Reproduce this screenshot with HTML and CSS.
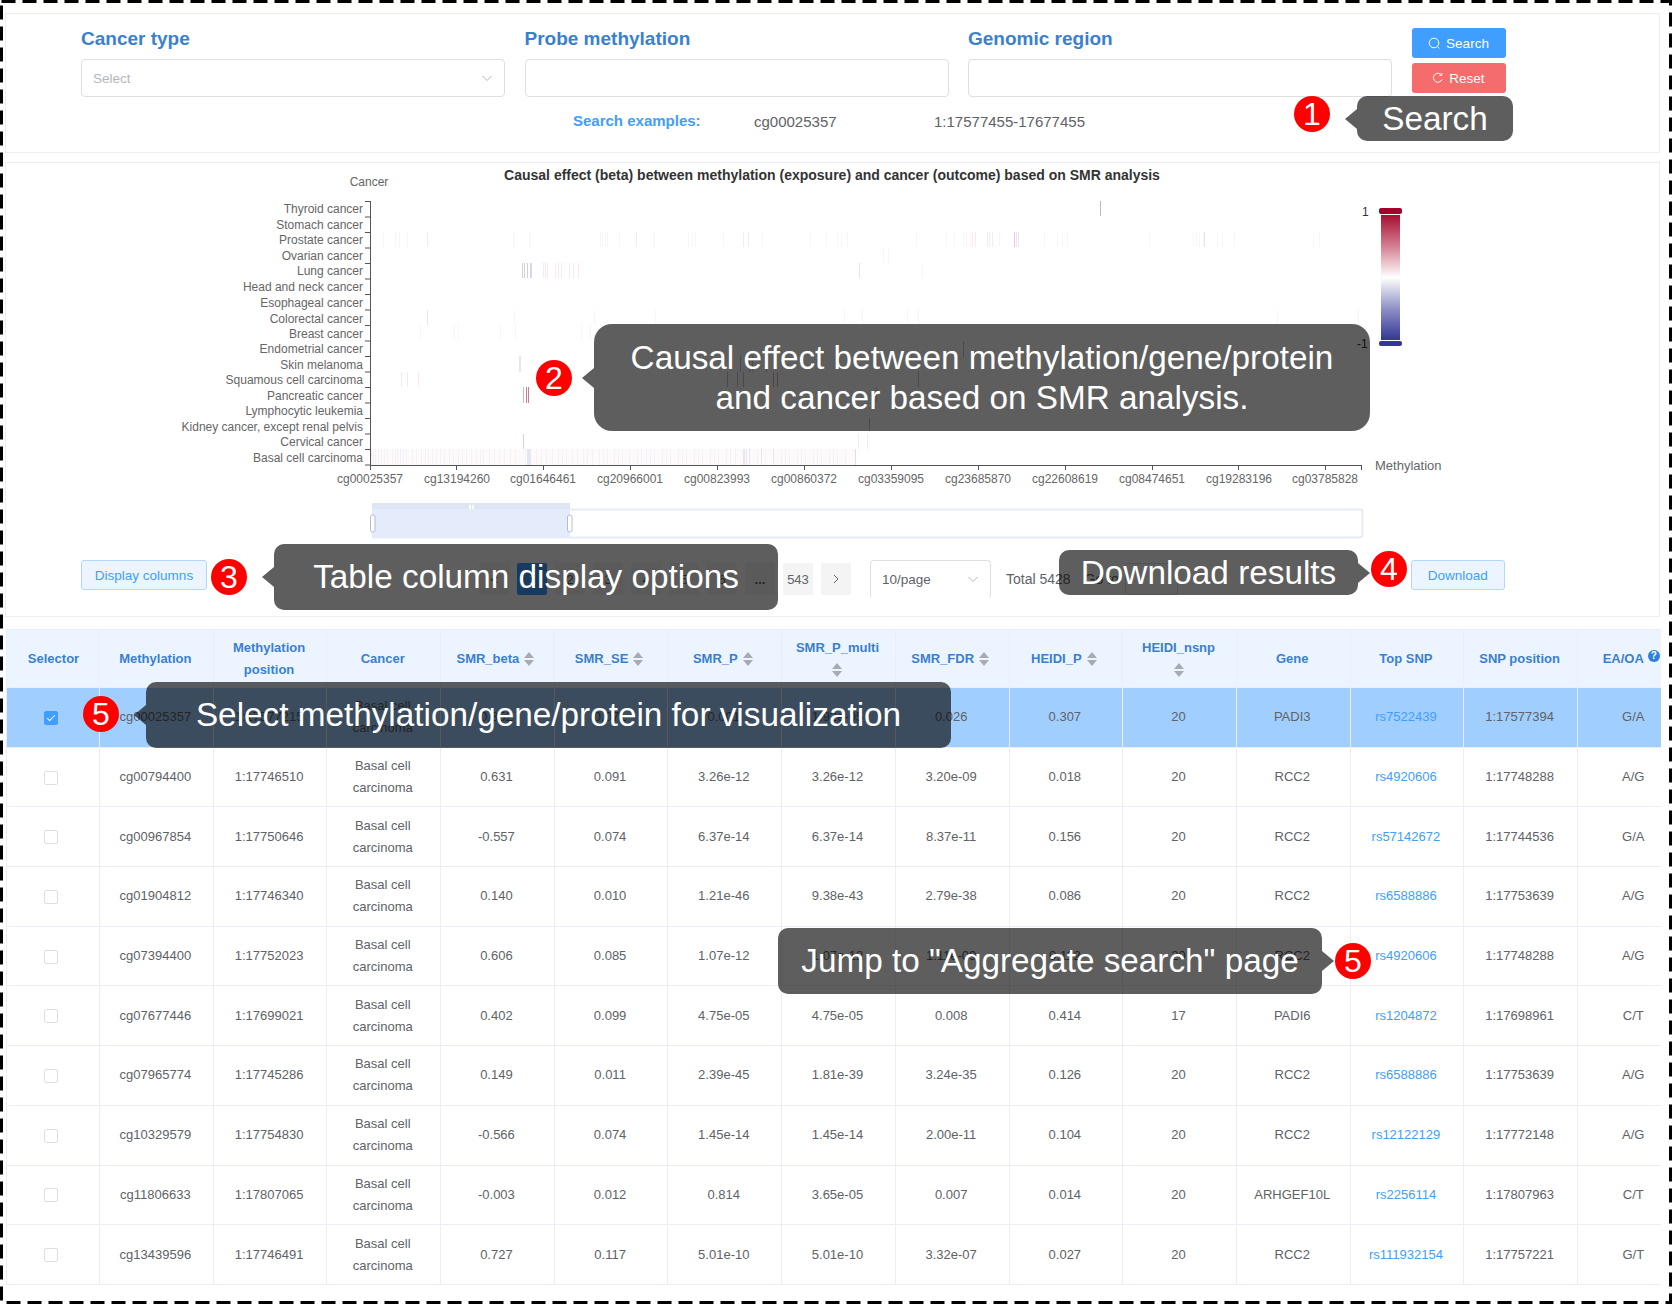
FILE: index.html
```html
<!DOCTYPE html>
<html>
<head>
<meta http-equiv="Content-type" content="text/html; charset=UTF-8">
<title>SMR search</title>
<link rel="stylesheet" href="styles.css">
</head>
<body>
<div class="page">

  <!-- search form -->
  <section class="panel panel-search">
    <div class="search-row">
      <div class="field">
        <label>Cancer type</label>
        <div class="control">
          <span class="placeholder">Select</span>
          <svg class="chevron" width="12" height="12" viewBox="0 0 12 12"><path d="M1.5 4l4.5 4.5L10.500 4" fill="none" stroke="#b4b7bd" stroke-width="1"/></svg>
        </div>
      </div>
      <div class="field">
        <label>Probe methylation</label>
        <div class="control"></div>
      </div>
      <div class="field">
        <label>Genomic region</label>
        <div class="control"></div>
      </div>
      <div class="search-buttons">
        <button class="btn btn-blue">
          <svg width="13" height="13" viewBox="0 0 13 13"><circle cx="6" cy="6" r="4.800" fill="none" stroke="#fff"/><path d="M9.500 9.500l2 2" stroke="#fff"/></svg>
          Search
        </button>
        <button class="btn btn-red">
          <svg width="12" height="12" viewBox="0 0 12 12"><path d="M9.500 3a4.500 4.500 0 1 0 .6 4.500" fill="none" stroke="#fff"/><path d="M9.800 1v2.500H7.300" fill="none" stroke="#fff" stroke-width=".8"/></svg>
          Reset
        </button>
      </div>
    </div>
    <div class="examples">
      <b class="examples-title">Search examples:</b>
      <span class="example-probe">cg00025357</span>
      <span class="example-region">1:17577455-17677455</span>
    </div>
  </section>

  <!-- heatmap + toolbar -->
  <section class="panel panel-chart">
    <svg class="chart" width="1653" height="385" viewBox="6 163 1653 385">
      <text class="chart-title" x="832" y="180" text-anchor="middle">Causal effect (beta) between methylation (exposure) and cancer (outcome) based on SMR analysis</text>
      <text class="axis-name" x="369" y="186" text-anchor="middle">Cancer</text>

      <g class="row-labels" text-anchor="end">
        <text x="363" y="213">Thyroid cancer</text>
        <text x="363" y="229">Stomach cancer</text>
        <text x="363" y="244">Prostate cancer</text>
        <text x="363" y="260">Ovarian cancer</text>
        <text x="363" y="275">Lung cancer</text>
        <text x="363" y="291">Head and neck cancer</text>
        <text x="363" y="307">Esophageal cancer</text>
        <text x="363" y="323">Colorectal cancer</text>
        <text x="363" y="338">Breast cancer</text>
        <text x="363" y="353">Endometrial cancer</text>
        <text x="363" y="369">Skin melanoma</text>
        <text x="363" y="384">Squamous cell carcinoma</text>
        <text x="363" y="400">Pancreatic cancer</text>
        <text x="363" y="415">Lymphocytic leukemia</text>
        <text x="363" y="431">Kidney cancer, except renal pelvis</text>
        <text x="363" y="446">Cervical cancer</text>
        <text x="363" y="462">Basal cell carcinoma</text>
      </g>

      <!-- heat cells, one stroke colour per group -->
      <rect x="371" y="449" width="485" height="16" fill="#fcfafb"/>
      <g fill="none" stroke-width="1">
        <path stroke="#b5b8da" d="M1100.500 201v15"/>
        <path stroke="#f7f5f8" d="M383.500 232v15M395.500 232v15M399.500 232v15M407.500 232v15M513.500 232v15M529.500 232v15M600.500 232v15M602.500 232v15M605.500 232v15M607.500 232v15M619.500 232v15M654.500 232v15M688.500 232v15M692.500 232v15M695.500 232v15M723.500 232v15M762.500 232v15M810.500 232v15M826.500 232v15M837.500 232v15M841.500 232v15M847.500 232v15M916.500 232v15M946.500 232v15M954.500 232v15M963.500 232v15M966.500 232v15M970.500 232v15M999.500 232v15M1044.500 232v15M1057.500 232v15M1062.500 232v15M1067.500 232v15M1149.500 232v15M1193.500 232v15M1196.500 232v15M1199.500 232v15M1203.500 232v15M1217.500 232v15M1222.500 232v15M1234.500 232v15M1313.500 232v15M1319.500 232v15M883.500 248v15M888.500 248v15M922.500 263v15M514.500 310v15M594.500 310v15M655.500 310v15M844.500 310v15M862.500 310v15M907.500 310v15M918.500 310v15M1277.500 310v15M1358.500 310v15M420.500 325v15M454.500 325v15M458.500 325v15M500.500 325v15M515.500 325v15M581.500 325v15M590.500 325v15"/>
        <path stroke="#f8eaee" d="M427.500 232v15M636.500 232v15M743.500 232v15M748.500 232v15M972.500 232v15M975.500 232v15M987.500 232v15M989.500 232v15M992.500 232v15M543.500 263v15M545.500 263v15M547.500 263v15M555.500 263v15M558.500 263v15M561.500 263v15M569.500 263v15M573.500 263v15M578.500 263v15M401.500 372v15M407.500 372v15M418.500 372v15"/>
        <path stroke="#e8cad4" d="M1014.500 232v15M523.500 434v15"/>
        <path stroke="#e4e6f3" d="M1016.500 232v15M1018.500 232v15M1204.500 232v15M859.500 263v15M427.500 310v15M519.500 356v16M520.500 356v16"/>
        <path stroke="#d2d0de" d="M522.500 263v15M524.500 263v15M527.500 263v15"/>
        <path stroke="#d4d8ee" d="M530.500 263v15M531.500 263v15"/>
        <path stroke="#b9bcdc" d="M523.500 387v16"/>
        <path stroke="#cf7b8f" d="M526.500 387v16M528.500 387v16"/>
        <path stroke="#c8c4d8" d="M740.500 356v16M749.500 356v16M752.500 356v16M963.500 341v16M727.500 372v15M737.500 372v15M743.500 372v15M918.500 372v15M876.500 387v15M869.500 418v13"/>
        <path stroke="#dab4c0" d="M766.500 356v16M773.500 372v15M777.500 372v15"/>
        <path stroke="#f7eaee" d="M858.500 434v15M867.500 434v15"/>

        <!-- basal cell carcinoma row -->
        <path stroke="#f9f0f3" d="M371.500 449v16M373.500 449v16M375.500 449v16M378.500 449v16M381.500 449v16M384.500 449v16M387.500 449v16M392.500 449v16M395.500 449v16M412.500 449v16M416.500 449v16M421.500 449v16M425.500 449v16M428.500 449v16M432.500 449v16M436.500 449v16M444.500 449v16M449.500 449v16M453.500 449v16M462.500 449v16M466.500 449v16M471.500 449v16M476.500 449v16M483.500 449v16M489.500 449v16M494.500 449v16M499.500 449v16M504.500 449v16M510.500 449v16M515.500 449v16M536.500 449v16M541.500 449v16M546.500 449v16M552.500 449v16M558.500 449v16M566.500 449v16M572.500 449v16M577.500 449v16M583.500 449v16M592.500 449v16M599.500 449v16M607.500 449v16M614.500 449v16M622.500 449v16M629.500 449v16M637.500 449v16M646.500 449v16M654.500 449v16M662.500 449v16M670.500 449v16M678.500 449v16M686.500 449v16M694.500 449v16M702.500 449v16M710.500 449v16M718.500 449v16M726.500 449v16M735.500 449v16M757.500 449v16M765.500 449v16M781.500 449v16M789.500 449v16M797.500 449v16M805.500 449v16M813.500 449v16M821.500 449v16M829.500 449v16M837.500 449v16M845.500 449v16"/>
        <path stroke="#f0f2f9" d="M397.500 449v16M400.500 449v16M403.500 449v16M406.500 449v16M440.500 449v16M458.500 449v16M480.500 449v16M525.500 449v16M562.500 449v16M587.500 449v16M603.500 449v16M618.500 449v16M641.500 449v16M650.500 449v16M666.500 449v16M682.500 449v16M698.500 449v16M714.500 449v16M730.500 449v16M785.500 449v16M801.500 449v16M817.500 449v16M833.500 449v16"/>
        <path stroke="#e4e6f4" d="M527.500 449v16M528.500 449v16M529.500 449v16M530.500 449v16"/>
        <path stroke="#ebe4ee" d="M743.500 449v16M744.500 449v16M746.500 449v16M749.500 449v16M761.500 449v16M773.500 449v16"/>
        <path stroke="#f3d9df" d="M855.500 449v16"/>
      </g>

      <!-- axes -->
      <g class="axis-line">
        <path d="M370.500 201v265M365 201.500h5M365 217h5M365 232.500h5M365 248h5M365 263.500h5M365 279h5M365 294.500h5M365 310h5M365 325.500h5M365 341h5M365 356.500h5M365 372h5M365 387.500h5M365 403h5M365 418.500h5M365 434h5M365 449.500h5M365 465h5"/>
        <path d="M370 465.500h991M370.500 465v5M456.500 465v5M543.500 465v5M630.500 465v5M717.500 465v5M804.500 465v5M891.500 465v5M978.500 465v5M1065.500 465v5M1152.500 465v5M1238.500 465v5M1325.500 465v5M1361.500 465v5"/>
      </g>
      <g class="tick-labels" text-anchor="middle">
        <text x="370" y="483">cg00025357</text>
        <text x="457" y="483">cg13194260</text>
        <text x="543" y="483">cg01646461</text>
        <text x="630" y="483">cg20966001</text>
        <text x="717" y="483">cg00823993</text>
        <text x="804" y="483">cg00860372</text>
        <text x="891" y="483">cg03359095</text>
        <text x="978" y="483">cg23685870</text>
        <text x="1065" y="483">cg22608619</text>
        <text x="1152" y="483">cg08474651</text>
        <text x="1239" y="483">cg19283196</text>
        <text x="1325" y="483">cg03785828</text>
      </g>
      <text class="axis-end" x="1375" y="470">Methylation</text>

      <!-- colour scale -->
      <defs>
        <linearGradient id="scale" x1="0" y1="0" x2="0" y2="1">
          <stop offset="0" stop-color="#a50f30"/>
          <stop offset=".25" stop-color="#d37f92"/>
          <stop offset=".5" stop-color="#ffffff"/>
          <stop offset=".75" stop-color="#8f90c6"/>
          <stop offset="1" stop-color="#333795"/>
        </linearGradient>
      </defs>
      <rect x="1381" y="215" width="19" height="125" fill="url(#scale)"/>
      <rect x="1379" y="208" width="23" height="6" rx="2" fill="#a5002a"/>
      <rect x="1379" y="341" width="23" height="5" rx="2" fill="#333795"/>
      <text class="scale-label" x="1362" y="216">1</text>
      <text class="scale-label" x="1357" y="348">-1</text>

      <!-- data zoom -->
      <rect x="372.500" y="509.500" width="990" height="28" rx="3" fill="#fff" stroke="#e6ebf6" stroke-width="2"/>
      <rect x="372" y="503" width="198" height="7" fill="#dfe5f3"/>
      <rect x="372" y="509" width="198" height="29" fill="#e4ebfa"/>
      <path d="M470 505v4M473 505v4" stroke="#fff" stroke-width="2"/>
      <rect x="370.500" y="515" width="4.500" height="17" rx="2" fill="#fff" stroke="#b5bdd0"/>
      <rect x="567.500" y="515" width="4.500" height="17" rx="2" fill="#fff" stroke="#b5bdd0"/>
    </svg>

    <div class="toolbar">
      <button class="btn btn-plain btn-columns">Display columns</button>
      <div class="pager">
        <span class="pager-item">&lt;</span>
        <span class="pager-item pager-on">1</span>
        <span class="pager-item">2</span>
        <span class="pager-item">3</span>
        <span class="pager-item">4</span>
        <span class="pager-item">5</span>
        <span class="pager-item">6</span>
        <span class="pager-item pager-more">...</span>
        <span class="pager-item">543</span>
        <span class="pager-item">
          <svg width="10" height="10" viewBox="0 0 10 10"><path d="M3 1l4 4-4 4" fill="none" stroke="#606266"/></svg>
        </span>
      </div>
      <div class="page-size">
        <span>10/page</span>
        <svg class="chevron" width="12" height="12" viewBox="0 0 12 12"><path d="M1.500 4l4.500 4.500L10.500 4" fill="none" stroke="#b4b7bd"/></svg>
      </div>
      <span class="total">Total 5428</span>
      <span class="goto">Go to</span>
      <span class="goto-box"></span>
      <button class="btn btn-plain btn-download">Download</button>
    </div>
  </section>

  <!-- results -->
  <div class="table-wrap">
    <table class="results">
      <thead>
        <tr>
          <th>Selector</th>
          <th>Methylation</th>
          <th>Methylation<br>position</th>
          <th>Cancer</th>
          <th>SMR_beta<i class="sort"></i></th>
          <th>SMR_SE<i class="sort"></i></th>
          <th>SMR_P<i class="sort"></i></th>
          <th>SMR_P_multi<br><i class="sort sort-under"></i></th>
          <th>SMR_FDR<i class="sort"></i></th>
          <th>HEIDI_P<i class="sort"></i></th>
          <th>HEIDI_nsnp<br><i class="sort sort-under"></i></th>
          <th>Gene</th>
          <th>Top SNP</th>
          <th>SNP position</th>
          <th class="th-last">EA/OA<span class="help">?</span></th>
        </tr>
      </thead>
      <tbody>
        <tr class="picked"><td><span class="check check-on"></span></td><td>cg00025357</td><td>1:17577215</td><td>Basal cell<br>carcinoma</td><td>0.352</td><td>0.071</td><td>0.001</td><td>1.92e-05</td><td>0.026</td><td>0.307</td><td>20</td><td>PADI3</td><td><a>rs7522439</a></td><td>1:17577394</td><td>G/A</td></tr>
        <tr><td><span class="check"></span></td><td>cg00794400</td><td>1:17746510</td><td>Basal cell<br>carcinoma</td><td>0.631</td><td>0.091</td><td>3.26e-12</td><td>3.26e-12</td><td>3.20e-09</td><td>0.018</td><td>20</td><td>RCC2</td><td><a>rs4920606</a></td><td>1:17748288</td><td>A/G</td></tr>
        <tr><td><span class="check"></span></td><td>cg00967854</td><td>1:17750646</td><td>Basal cell<br>carcinoma</td><td>-0.557</td><td>0.074</td><td>6.37e-14</td><td>6.37e-14</td><td>8.37e-11</td><td>0.156</td><td>20</td><td>RCC2</td><td><a>rs57142672</a></td><td>1:17744536</td><td>G/A</td></tr>
        <tr><td><span class="check"></span></td><td>cg01904812</td><td>1:17746340</td><td>Basal cell<br>carcinoma</td><td>0.140</td><td>0.010</td><td>1.21e-46</td><td>9.38e-43</td><td>2.79e-38</td><td>0.086</td><td>20</td><td>RCC2</td><td><a>rs6588886</a></td><td>1:17753639</td><td>A/G</td></tr>
        <tr><td><span class="check"></span></td><td>cg07394400</td><td>1:17752023</td><td>Basal cell<br>carcinoma</td><td>0.606</td><td>0.085</td><td>1.07e-12</td><td>1.07e-12</td><td>1.11e-09</td><td>0.112</td><td>20</td><td>RCC2</td><td><a>rs4920606</a></td><td>1:17748288</td><td>A/G</td></tr>
        <tr><td><span class="check"></span></td><td>cg07677446</td><td>1:17699021</td><td>Basal cell<br>carcinoma</td><td>0.402</td><td>0.099</td><td>4.75e-05</td><td>4.75e-05</td><td>0.008</td><td>0.414</td><td>17</td><td>PADI6</td><td><a>rs1204872</a></td><td>1:17698961</td><td>C/T</td></tr>
        <tr><td><span class="check"></span></td><td>cg07965774</td><td>1:17745286</td><td>Basal cell<br>carcinoma</td><td>0.149</td><td>0.011</td><td>2.39e-45</td><td>1.81e-39</td><td>3.24e-35</td><td>0.126</td><td>20</td><td>RCC2</td><td><a>rs6588886</a></td><td>1:17753639</td><td>A/G</td></tr>
        <tr><td><span class="check"></span></td><td>cg10329579</td><td>1:17754830</td><td>Basal cell<br>carcinoma</td><td>-0.566</td><td>0.074</td><td>1.45e-14</td><td>1.45e-14</td><td>2.00e-11</td><td>0.104</td><td>20</td><td>RCC2</td><td><a>rs12122129</a></td><td>1:17772148</td><td>A/G</td></tr>
        <tr><td><span class="check"></span></td><td>cg11806633</td><td>1:17807065</td><td>Basal cell<br>carcinoma</td><td>-0.003</td><td>0.012</td><td>0.814</td><td>3.65e-05</td><td>0.007</td><td>0.014</td><td>20</td><td>ARHGEF10L</td><td><a>rs2256114</a></td><td>1:17807963</td><td>C/T</td></tr>
        <tr><td><span class="check"></span></td><td>cg13439596</td><td>1:17746491</td><td>Basal cell<br>carcinoma</td><td>0.727</td><td>0.117</td><td>5.01e-10</td><td>5.01e-10</td><td>3.32e-07</td><td>0.027</td><td>20</td><td>RCC2</td><td><a>rs111932154</a></td><td>1:17757221</td><td>G/T</td></tr>
      </tbody>
    </table>
  </div>

  <!-- callouts over the page -->
  <div class="note note-search arrow-left">Search</div>
  <span class="badge badge-1">1</span>

  <div class="note note-chart arrow-left">Causal effect between methylation/gene/protein<br>and cancer based on SMR analysis.</div>
  <span class="badge badge-2">2</span>

  <div class="note note-columns arrow-left">Table column display options</div>
  <span class="badge badge-3">3</span>

  <div class="note note-download arrow-right">Download results</div>
  <span class="badge badge-4">4</span>

  <div class="note note-select arrow-left">Select methylation/gene/protein for visualization</div>
  <span class="badge badge-5a">5</span>

  <div class="note note-jump arrow-right">Jump to "Aggregate search" page</div>
  <span class="badge badge-5b">5</span>

  <!-- dashed frame of the figure -->
  <svg class="frame" width="1674" height="1305">
    <rect x="1.500" y="1.500" width="1669" height="1301" fill="none" stroke="#000" stroke-width="3" stroke-dasharray="14 7"/>
  </svg>
</div>
</body>
</html>
```

FILE: styles.css
```css
* {box-sizing: border-box;}
html, body {margin: 0; background: #fff;}
body {font-family: "Liberation Sans", Arial, sans-serif; font-size: 13px; color: #606266;}
.page {position: relative; width: 1674px; height: 1305px; padding: 13px 0 0 5px; overflow: hidden;}
.frame {position: absolute; left: 0; top: 0;}

/* panels */
.panel {width: 1655px; border: 1px solid #ebeef5; background: #fff;}
.panel-search {height: 140px; padding-top: 14px;}
.panel-chart {height: 455px; margin-top: 9px;}

/* search form */
.search-row {display: flex; gap: 19.500px; padding-left: 75px;}
.field {width: 424px;}
.field label {display: block; height: 20px; margin-bottom: 11px; font-size: 19px; line-height: 22px; font-weight: bold; color: #3a7fd0;}
.control {display: flex; align-items: center; justify-content: space-between; height: 38px; padding: 0 11px; border: 1px solid #dcdfe6; border-radius: 4px;}
.placeholder {font-size: 13.500px; color: #b4b7bd;}
.search-buttons {display: flex; flex-direction: column; gap: 5px;}

.btn {display: flex; align-items: center; justify-content: center; gap: 5px; width: 94px; height: 30px; padding: 0; border: 1px solid transparent; border-radius: 3px; font: 13.500px "Liberation Sans", Arial, sans-serif; color: #fff;}
.btn-blue {background: #409eff;}
.btn-red {background: #f56c6c;}
.btn-plain {background: #ecf5ff; border-color: #b3d8ff; color: #409eff;}

.examples {display: flex; align-items: center; height: 24px; margin: 12px 0 0 567px; font-size: 15px;}
.examples-title {width: 181px; margin-bottom: 2px; color: #409eff;}
.example-probe {width: 180px; margin-top: 1px;}
.example-region {margin-top: 1px;}

/* chart */
.chart {display: block;}
.chart text {font-family: "Liberation Sans", Arial, sans-serif; font-size: 12px; fill: #666;}
.chart .chart-title {font-size: 14px; font-weight: bold; fill: #333;}
.chart .axis-end {font-size: 13px;}
.chart .scale-label {fill: #333;}
.axis-line path {fill: none; stroke: #555; stroke-width: 1;}

/* toolbar under the chart */
.toolbar {display: flex; align-items: flex-start; padding: 12px 0 0 75px; height: 69px;}
.btn-columns {width: 126px;}
.pager {display: flex; gap: 8px; margin: 3px 0 0 272px;}
.pager-item {display: flex; align-items: center; justify-content: center; width: 30px; height: 32px; background: #f4f4f5; border-radius: 2px; color: #606266;}
.pager-more {font-weight: bold;}
.pager-on {background: #409eff; color: #fff;}
.page-size {display: flex; align-items: center; justify-content: space-between; width: 121px; height: 38px; margin-left: 19px; padding: 0 11px; border: 1px solid #dcdfe6; border-bottom-color: #fff; border-radius: 4px; font-size: 13.500px;}
.total {margin: 11px 0 0 15px; font-size: 14px;}
.goto {margin: 11px 0 0 14px; font-size: 14px;}
.goto-box {width: 53px; height: 32px; margin: 3px 0 0 6px; border: 1px solid #dcdfe6; border-radius: 3px;}
.btn-download {margin-left: 233px;}

/* results table */
.table-wrap {width: 1655px; margin: 12px 0 0 1px; overflow: hidden;}
.results {width: 1684.800px; table-layout: fixed; border-collapse: collapse; text-align: center;}
.results th, .results td {width: 113.700px; padding: 0 2px 0 0; border: 1px solid #ebeef5; line-height: 22px;}
.results th:first-child, .results td:first-child {width: 93px;}
.results th:first-child {padding: 0 0 0 1px;}
.results td:first-child {padding: 0 5px 0 0;}
.results th {height: 58px; background: #ecf5ff; color: #3a7fd0; font-weight: bold; font-size: 13px;}
.results td {height: 59.700px;}
.results a {color: #409eff;}
.picked td {background: #a0cfff;}
.results .th-last {padding-right: 6px;}
.help {display: inline-block; position: relative; top: -4px; width: 12px; height: 12px; margin-left: 4px; border-radius: 50%; background: #2f80d8; color: #fff; font-size: 10px; line-height: 12px;}

.sort {display: inline-block; position: relative; width: 10px; height: 14px; margin: 0 2px 0 5px; vertical-align: middle;}
.sort-under {margin: 0;}
.sort::before, .sort::after {content: ""; position: absolute; left: 0; border-left: 5px solid transparent; border-right: 5px solid transparent;}
.sort::before {top: 0; border-bottom: 6px solid #a8abb2;}
.sort::after {bottom: 0; border-top: 6px solid #a8abb2;}

.check {display: inline-block; position: relative; width: 14px; height: 14px; border: 1px solid #dcdfe6; border-radius: 2px; background: #fff; vertical-align: middle;}
.check-on {background: #409eff; border-color: #409eff;}
.check-on::after {content: ""; position: absolute; left: 4px; top: 1px; width: 3px; height: 7px; border: 1px solid #fff; border-width: 0 1px 1px 0; transform: rotate(45deg);}

/* callouts */
.note {position: absolute; display: flex; align-items: center; justify-content: center; text-align: center; border-radius: 10px; background: rgba(0, 0, 0, .63); color: #fff; font-size: 33.300px; line-height: 40px;}
.note::before {content: ""; position: absolute; top: 50%; margin-top: -10px; border-top: 10px solid transparent; border-bottom: 10px solid transparent;}
.arrow-left::before {left: -12px; border-right: 12px solid rgba(0, 0, 0, .63);}
.arrow-right::before {right: -12px; border-left: 12px solid rgba(0, 0, 0, .63);}

.note-search {left: 1357px; top: 96px; width: 156px; height: 45px;}
.note-chart {left: 594px; top: 324px; width: 776px; height: 107px; border-radius: 18px;}
.note-columns {left: 274px; top: 544px; width: 504px; height: 66px;}
.note-download {left: 1059px; top: 550px; width: 299px; height: 45px;}
.note-select {left: 146px; top: 682px; width: 805px; height: 66px;}
.note-jump {left: 778px; top: 928px; width: 544px; height: 66px;}

.badge {position: absolute; width: 36px; height: 36px; border-radius: 50%; background: #f00; color: #fff; font-size: 32px; line-height: 36px; text-align: center;}
.badge-1 {left: 1294px; top: 96px;}
.badge-2 {left: 536px; top: 360px;}
.badge-3 {left: 211px; top: 559px;}
.badge-4 {left: 1371px; top: 551px;}
.badge-5a {left: 83px; top: 696px;}
.badge-5b {left: 1335px; top: 943px;}
```
